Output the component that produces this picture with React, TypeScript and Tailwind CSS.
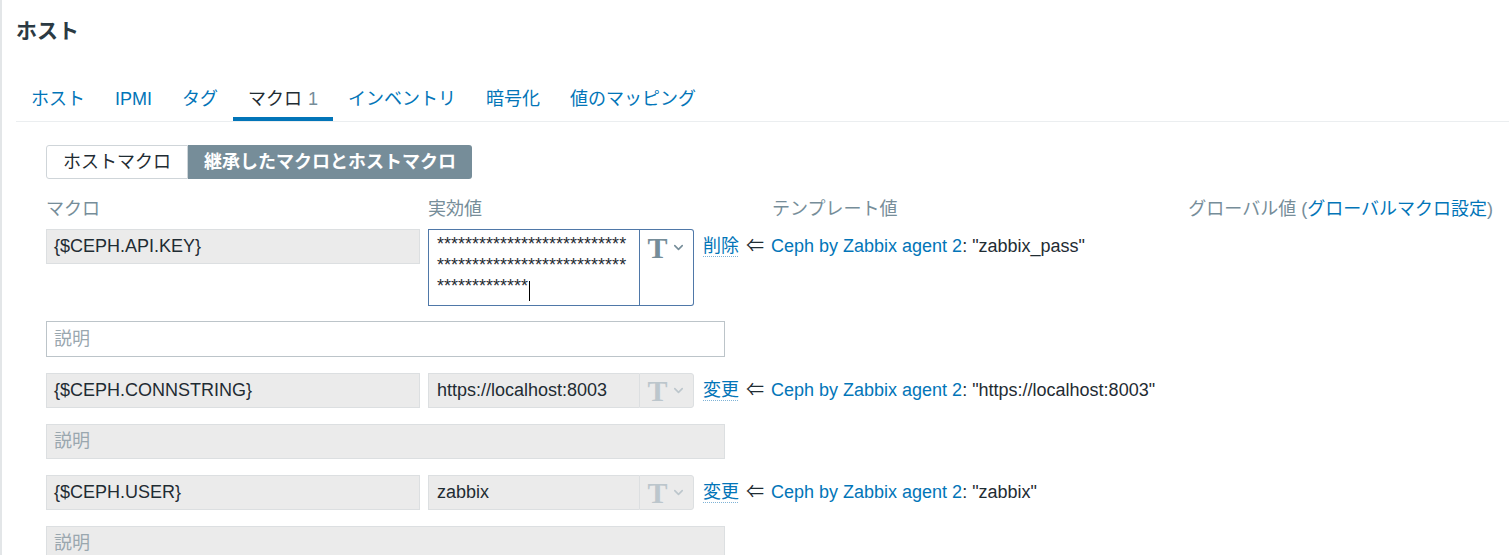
import { ChevronDown } from 'lucide-react'

const FONT = { fontFamily: '"Liberation Sans", "Noto Sans CJK JP", sans-serif' }

const TABS = [
  { label: 'ホスト' },
  { label: 'IPMI' },
  { label: 'タグ' },
  { label: 'マクロ', count: '1', active: true },
  { label: 'インベントリ' },
  { label: '暗号化' },
  { label: '値のマッピング' },
]

const ROWS = [
  { macro: '{$CEPH.CONNSTRING}', value: 'https://localhost:8003', tpl: '"https://localhost:8003"' },
  { macro: '{$CEPH.USER}', value: 'zabbix', tpl: '"zabbix"' },
]

function TypeButton({ disabled }: { disabled?: boolean }) {
  return (
    <div
      className={`w-[55px] h-[35px] flex items-center justify-center gap-[3px] rounded-r-[3px] border ${
        disabled ? 'border-[#dcdfe1] bg-[#ebebeb] text-[#bcc6cc]' : 'border-[#4f78a8] border-b-transparent bg-white text-[#768d99]'
      }`}
    >
      <span className="text-[30px] font-bold leading-none" style={{ fontFamily: '"Liberation Serif", serif' }}>T</span>
      <ChevronDown size={15} strokeWidth={2.5} />
    </div>
  )
}

function TemplateInfo({ action, value }: { action: string; value: string }) {
  return (
    <div className="ml-[9px] flex items-center h-[35px] text-[18px] whitespace-nowrap">
      <span className="text-[#0275b8] underline decoration-dotted decoration-1 underline-offset-4 decoration-[#7fb3d6]">{action}</span>
      <span className="mx-[7px] text-[#1f2c33]">⇐</span>
      <span className="text-[#0275b8]">Ceph by Zabbix agent 2</span>
      <span className="text-[#1f2c33]">: {value}</span>
    </div>
  )
}

export default function App() {
  const stars27 = '*'.repeat(27)
  return (
    <div className="w-[1509px] h-[555px] overflow-hidden bg-white border-l-2 border-[#e3e6e8]" style={FONT}>
      <h1 className="pl-[14px] pt-[15px] h-[64px] text-[21px] font-bold text-[#2b3a43]">ホスト</h1>

      {/* Tabs */}
      <div className="ml-[14px] mt-[12px] flex border-b border-[#ebeef0] h-[46px]">
        {TABS.map(t => (
          <div
            key={t.label}
            className={`px-[15px] pt-[5px] flex items-center text-[18px] border-b-4 ${
              t.active ? 'border-[#0275b8] text-[#1f2c33]' : 'border-transparent text-[#0275b8]'
            }`}
          >
            {t.label}
            {t.count && <span className="ml-[6px] text-[#768d99]">{t.count}</span>}
          </div>
        ))}
      </div>

      <div className="pl-[44px] pt-[23px]">
        {/* Segmented control */}
        <div className="flex h-[34px] text-[18px]">
          <div className="px-[16px] flex items-center border border-[#cfd5d9] rounded-l-[3px] text-[#1f2c33]">ホストマクロ</div>
          <div className="px-[16px] flex items-center bg-[#768d99] rounded-r-[3px] text-white font-bold">継承したマクロとホストマクロ</div>
        </div>

        {/* Column headers */}
        <div className="flex mt-[16px] h-[28px] items-center text-[18px] text-[#768d99]">
          <span className="w-[382px]">マクロ</span>
          <span className="w-[344px]">実効値</span>
          <span className="flex-1">テンプレート値</span>
          <span className="pr-[16px]">
            グローバル値 (<span className="text-[#0275b8]">グローバルマクロ設定</span>)
          </span>
        </div>

        {/* Row 1: editable */}
        <div className="mt-[6px] flex items-start">
          <div className="w-[374px] h-[35px] px-[7px] flex items-center bg-[#ebebeb] border border-[#dcdfe1] text-[18px] text-[#1f2c33]">
            {'{$CEPH.API.KEY}'}
          </div>
          <div className="ml-2 flex h-[77px]">
            <div className="w-[211px] border border-r-0 border-[#4f78a8] px-[8px] pt-[4px] text-[18px] leading-[21px] text-[#1f2c33]">
              <div>{stars27}</div>
              <div>{stars27}</div>
              <div className="flex items-start">
                {'*'.repeat(13)}
                <span className="ml-[1px] mt-[5px] w-px h-[20px] bg-black" />
              </div>
            </div>
            <div className="flex flex-col w-[55px] border border-l-0 border-[#4f78a8] rounded-r-[3px]">
              <div className="h-[35px] flex items-center justify-center gap-[3px] border-l border-[#4f78a8] text-[#768d99]">
                <span className="text-[30px] font-bold leading-none" style={{ fontFamily: '"Liberation Serif", serif' }}>T</span>
                <ChevronDown size={15} strokeWidth={2.5} />
              </div>
              <div className="flex-1 border-l border-[#4f78a8]" />
            </div>
          </div>
          <TemplateInfo action="削除" value={'"zabbix_pass"'} />
        </div>
        <div className="mt-[15px] w-[679px] h-[36px] px-[7px] flex items-center border border-[#bcc4c9] text-[18px] text-[#9aa7af]">
          説明
        </div>

        {ROWS.map(r => (
          <div key={r.macro}>
            <div className="mt-[16px] flex items-start">
              <div className="w-[374px] h-[35px] px-[7px] flex items-center bg-[#ebebeb] border border-[#dcdfe1] text-[18px] text-[#1f2c33]">
                {r.macro}
              </div>
              <div className="ml-2 flex h-[35px]">
                <div className="w-[211px] px-[8px] flex items-center bg-[#ebebeb] border border-r-0 border-[#dcdfe1] text-[18px] text-[#1f2c33]">
                  {r.value}
                </div>
                <TypeButton disabled />
              </div>
              <TemplateInfo action="変更" value={r.tpl} />
            </div>
            <div className="mt-[16px] w-[679px] h-[35px] px-[7px] flex items-center bg-[#ebebeb] border border-[#dcdfe1] text-[18px] text-[#9aa7af]">
              説明
            </div>
          </div>
        ))}
      </div>
    </div>
  )
}
